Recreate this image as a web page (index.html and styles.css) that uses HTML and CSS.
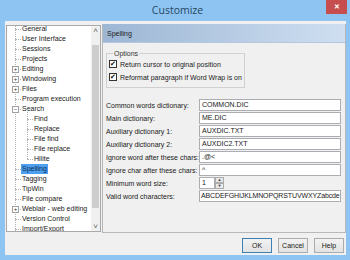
FILE: index.html
```html
<!DOCTYPE html>
<html>

<head>
    <title>Customize</title>
    <meta name="viewport" content="width=device-width, initial-scale=1.0">
    <link rel="stylesheet" href="styles.css">
</head>

<body>
    <div class="window">
        <div class="titlebar">
            <span class="title">Customize</span>
            <span class="close">✕</span>
        </div>
        <div class="client">
            <div class="main">
                <!-- 左侧树 -->
                <div class="tree">
                    <ul class="tree-list">
                        <li class="node">General</li>
                        <li class="node">User Interface</li>
                        <li class="node">Sessions</li>
                        <li class="node">Projects</li>
                        <li class="node has-box"><span class="box">+</span>Editing</li>
                        <li class="node has-box"><span class="box">+</span>Windowing</li>
                        <li class="node has-box"><span class="box">+</span>Files</li>
                        <li class="node">Program execution</li>
                        <li class="node has-box"><span class="box">−</span>Search</li>
                        <li>
                            <ul class="children">
                                <li class="node child">Find</li>
                                <li class="node child">Replace</li>
                                <li class="node child">File find</li>
                                <li class="node child">File replace</li>
                                <li class="node child">Hilite</li>
                            </ul>
                        </li>
                        <li class="node selected">Spelling</li>
                        <li class="node">Tagging</li>
                        <li class="node">TipWin</li>
                        <li class="node">File compare</li>
                        <li class="node has-box"><span class="box">+</span>Weblair - web editing</li>
                        <li class="node">Version Control</li>
                        <li class="node">Import/Export</li>
                    </ul>
                    <div class="scrollbar">
                        <span class="arrow">˄</span>
                        <div class="track"><div class="thumb"></div></div>
                        <span class="arrow">˅</span>
                    </div>
                </div>

                <!-- 右侧页面 -->
                <div class="page">
                    <div class="page-header">Spelling</div>
                    <fieldset class="options">
                        <legend>Options</legend>
                        <label class="check-row"><span class="check">✔</span>Return cursor to original position</label>
                        <label class="check-row"><span class="check">✔</span>Reformat paragraph if Word Wrap is on</label>
                    </fieldset>
                    <div class="fields">
                        <div class="field"><span class="label">Common words dictionary:</span><span class="input">COMMON.DIC</span></div>
                        <div class="field"><span class="label">Main dictionary:</span><span class="input">ME.DIC</span></div>
                        <div class="field"><span class="label">Auxiliary dictionary 1:</span><span class="input">AUXDIC.TXT</span></div>
                        <div class="field"><span class="label">Auxiliary dictionary 2:</span><span class="input">AUXDIC2.TXT</span></div>
                        <div class="field"><span class="label">Ignore word after these chars:</span><span class="input">.@&lt;</span></div>
                        <div class="field"><span class="label">Ignore char after these chars:</span><span class="input">^</span></div>
                        <div class="field">
                            <span class="label">Minimum word size:</span>
                            <span class="input small">1</span>
                            <span class="spin"><span class="spin-btn">▲</span><span class="spin-btn">▼</span></span>
                        </div>
                        <div class="field"><span class="label">Valid word characters:</span><span class="input tight">ABCDEFGHIJKLMNOPQRSTUVWXYZabcde</span></div>
                    </div>
                </div>
            </div>

            <div class="buttons">
                <span class="button default">OK</span>
                <span class="button">Cancel</span>
                <span class="button">Help</span>
            </div>
        </div>
    </div>
</body>

</html>
```

FILE: styles.css
```css
* {
    margin: 0;
    padding: 0;
    box-sizing: border-box;
}

body {
    width: 350px;
    height: 260px;
    overflow: hidden;
    font-family: "Liberation Sans", Arial, sans-serif;
    font-size: 7px;
    color: #1a1a1a;
}

.window {
    width: 350px;
    height: 260px;
    background: #8dc4f1;
    padding: 0 4px 5px 5px;
    display: flex;
    flex-direction: column;
}

.titlebar {
    height: 21px;
    display: grid;
    grid-template-columns: 1fr auto 1fr;
    margin-right: -4px;
}

.title {
    grid-column: 2;
    font-family: "Open Sans", sans-serif;
    font-size: 10.5px;
    color: #274764;
    line-height: 20px;
}

.close {
    grid-column: 3;
    justify-self: end;
    width: 21px;
    height: 14px;
    margin-right: 3px;
    background: #c74e4e;
    color: #fff;
    font-size: 7px;
    font-weight: bold;
    text-align: center;
    line-height: 14px;
}

.client {
    flex: 1;
    background: #f0f0f0;
    display: flex;
    flex-direction: column;
}

.main {
    display: flex;
    align-items: flex-start;
    margin-top: 3px;
}

/* 树 */
.tree {
    width: 95px;
    height: 207px;
    margin: 1px 1px 0 1px;
    border: 1px solid #a9a9a9;
    background: #fff;
    display: flex;
    overflow: hidden;
}

.tree-list {
    flex: 1;
    list-style: none;
    position: relative;
    margin-top: -2px;
}

.tree-list::before {
    content: '';
    position: absolute;
    left: 8px;
    top: 0;
    bottom: 0;
    border-left: 1px dotted #b4b4b4;
}

.node {
    height: 10px;
    line-height: 10px;
    padding-left: 15px;
    position: relative;
    white-space: nowrap;
}

.node::before {
    content: '';
    position: absolute;
    left: 8px;
    top: 5px;
    width: 6px;
    border-top: 1px dotted #b4b4b4;
}

.children {
    list-style: none;
    position: relative;
}

.children::before {
    content: '';
    position: absolute;
    left: 20px;
    top: -5px;
    height: 50px;
    border-left: 1px dotted #b4b4b4;
}

.node.child {
    padding-left: 27px;
}

.node.child::before {
    left: 20px;
}

.box {
    position: absolute;
    left: 5px;
    top: 2px;
    width: 7px;
    height: 7px;
    border: 1px solid #a0a0a0;
    background: #fff;
    font-size: 6px;
    line-height: 5px;
    text-align: center;
    color: #333;
    z-index: 1;
}

.node.selected {
    width: fit-content;
    margin-left: 14px;
    padding: 0 1px;
    background: #4d9ff0;
    color: #0d2b50;
}

.node.selected::before {
    left: -6px;
}

.scrollbar {
    width: 9px;
    background: #f0f0f0;
    display: flex;
    flex-direction: column;
    align-items: center;
}

.arrow {
    height: 9px;
    font-size: 8px;
    line-height: 10px;
    color: #606060;
}

.track {
    flex: 1;
    width: 100%;
    padding: 10px 1px 14px 1px;
}

.thumb {
    height: 100%;
    background: #cdcdcd;
}

/* 右侧 */
.page {
    width: 244px;
    height: 209px;
    border: 1px solid #b8b8b8;
    border-top: none;
    display: flex;
    flex-direction: column;
}

.page-header {
    height: 19px;
    padding-left: 4px;
    line-height: 19px;
    background: linear-gradient(to right, #9cb6d4, #cfdff1);
    border-bottom: 1px solid #b6c8dd;
}

.options {
    width: 139px;
    margin: 7px 0 0 3px;
    padding: 3px 2px 6px 2px;
    border: 1px solid #d0d0d0;
    display: flex;
    flex-direction: column;
    gap: 5px;
}

.options legend {
    margin-left: 4px;
    padding: 0 1px;
    color: #333;
}

.check-row {
    display: flex;
    align-items: center;
    gap: 3px;
    height: 8px;
}

.check {
    width: 8px;
    height: 8px;
    border: 1px solid #333;
    background: #fff;
    font-size: 7px;
    line-height: 6px;
    text-align: center;
    color: #111;
}

.fields {
    margin: 11px 0 0 3px;
    display: flex;
    flex-direction: column;
    gap: 1px;
}

.field {
    display: flex;
    align-items: center;
    height: 12px;
}

.label {
    width: 93px;
    flex-shrink: 0;
}

.input {
    width: 142px;
    height: 12px;
    border: 1px solid #abadb3;
    background: #fff;
    padding-left: 2px;
    line-height: 10px;
    white-space: nowrap;
    overflow: hidden;
}

.input.tight {
    padding-left: 1px;
    letter-spacing: -0.12px;
}

.input.small {
    width: 16px;
}

.spin {
    width: 9px;
    height: 12px;
    display: flex;
    flex-direction: column;
}

.spin-btn {
    flex: 1;
    border: 1px solid #acacac;
    background: #e8e8e8;
    font-size: 4px;
    line-height: 4px;
    text-align: center;
    color: #333;
}

/* 底部按钮 */
.buttons {
    display: flex;
    justify-content: flex-end;
    gap: 6px;
    margin: 5px 2px 0 0;
}

.button {
    width: 30px;
    height: 15px;
    border: 1px solid #acacac;
    background: linear-gradient(#f2f2f2, #e3e3e3);
    text-align: center;
    line-height: 13px;
}

.button.default {
    border-color: #3c7fb1;
}
```
